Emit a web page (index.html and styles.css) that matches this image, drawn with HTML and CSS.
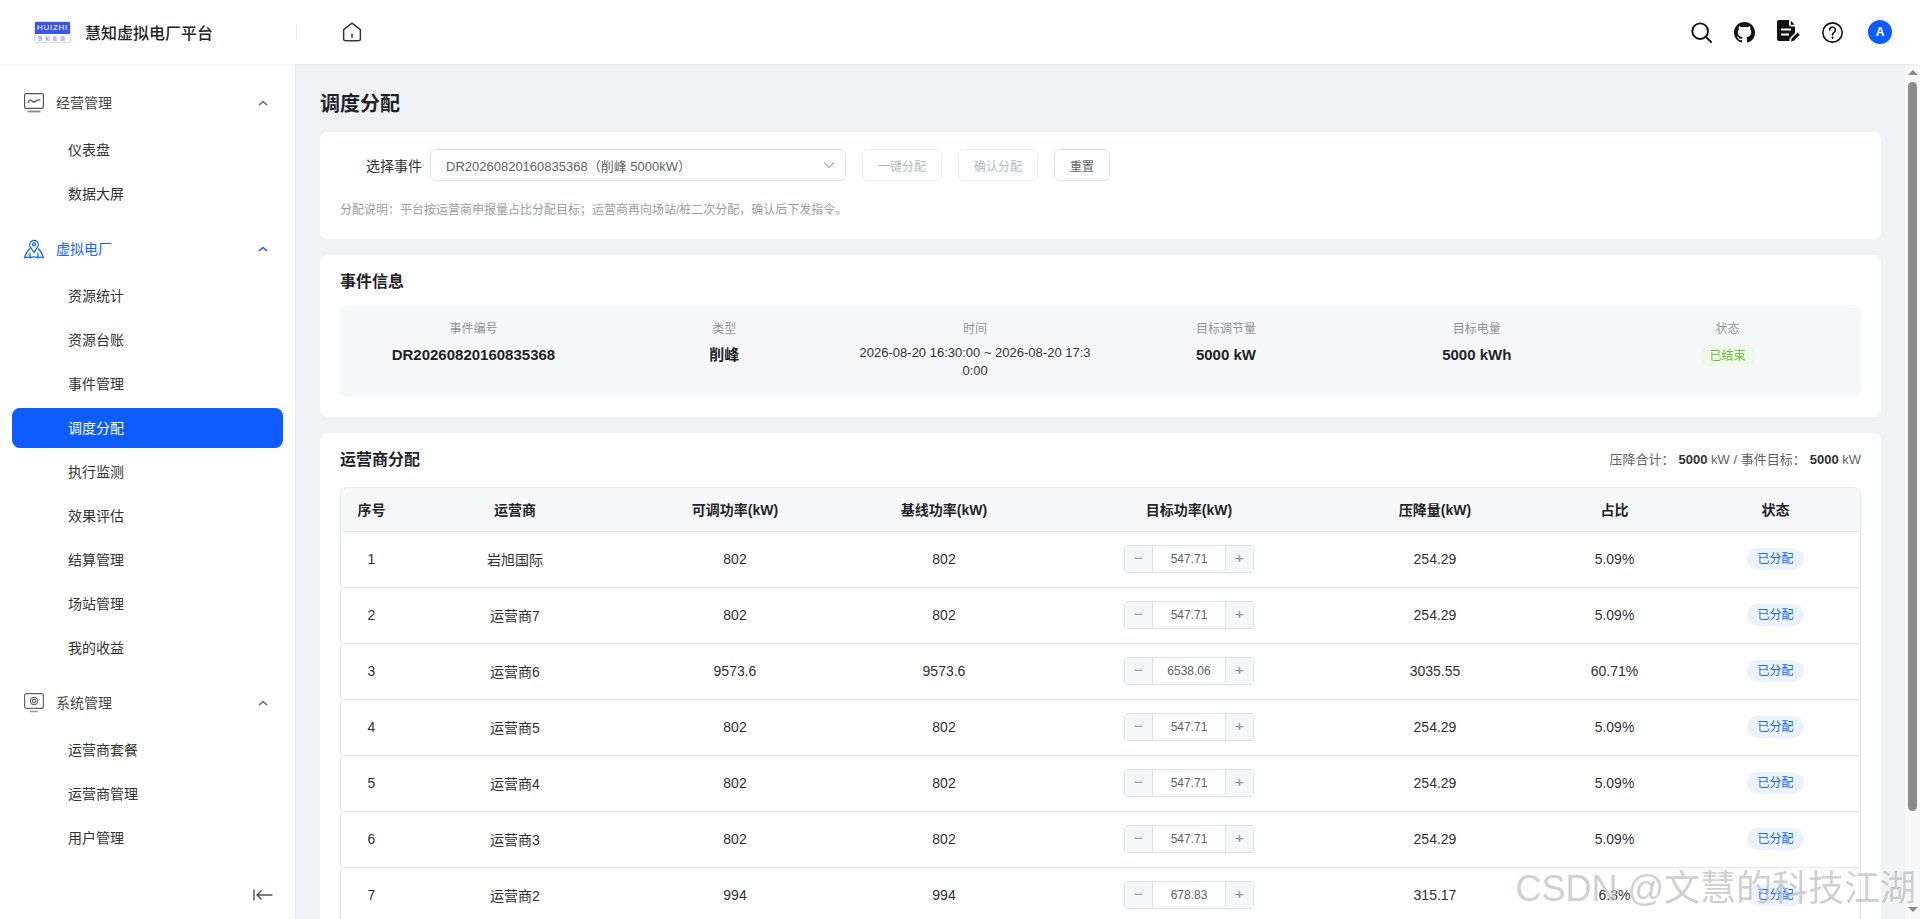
FILE: index.html
```html
<!DOCTYPE html>
<html lang="zh-CN">
<head>
    <meta charset="UTF-8">
    <meta name="viewport" content="width=device-width, initial-scale=1.0">
    <title>慧知虚拟电厂平台 - 调度分配</title>
    <link rel="stylesheet" href="styles.css">
</head>
<body>

    <header class="topbar">
        <div class="brand">
            <div class="logo">
                <span class="logo-top">HUIZHI</span>
                <span class="logo-bottom">慧知能源</span>
            </div>
            <span class="brand-name">慧知虚拟电厂平台</span>
        </div>
        <div class="topbar-left">
            <svg class="home-icon" viewBox="0 0 20 20" fill="none" stroke="#33363f" stroke-width="1.5" stroke-linejoin="round" stroke-linecap="round">
                <path d="M10 1.2 1.6 7.6v9.2a2 2 0 0 0 2 2h12.8a2 2 0 0 0 2-2V7.6L10 1.2Z"/>
                <path d="M10 12.2v3"/>
            </svg>
        </div>
        <div class="topbar-right">
            <svg class="tool-icon" viewBox="0 0 22 22" fill="none" stroke="#111" stroke-width="2" stroke-linecap="round">
                <circle cx="9.6" cy="9.6" r="8.2"/>
                <path d="M15.6 15.6 21 21"/>
            </svg>
            <svg class="tool-icon" viewBox="0 0 16 16" fill="#111">
                <path d="M8 0C3.58 0 0 3.58 0 8c0 3.54 2.29 6.53 5.47 7.59.4.07.55-.17.55-.38 0-.19-.01-.82-.01-1.49-2.01.37-2.53-.49-2.69-.94-.09-.23-.48-.94-.82-1.13-.28-.15-.68-.52-.01-.53.63-.01 1.08.58 1.23.82.72 1.21 1.87.87 2.33.66.07-.52.28-.87.51-1.07-1.78-.2-3.64-.89-3.64-3.95 0-.87.31-1.59.82-2.15-.08-.2-.36-1.02.08-2.12 0 0 .67-.21 2.2.82.64-.18 1.32-.27 2-.27.68 0 1.36.09 2 .27 1.53-1.04 2.2-.82 2.2-.82.44 1.1.16 1.92.08 2.12.51.56.82 1.27.82 2.15 0 3.07-1.87 3.75-3.65 3.95.29.25.54.73.54 1.48 0 1.07-.01 1.93-.01 2.2 0 .21.15.46.55.38A8.013 8.013 0 0016 8c0-4.42-3.58-8-8-8z"/>
            </svg>
            <svg class="tool-icon doc-icon" viewBox="0 0 23 22">
                <path d="M2 0h10v4.500a2 2 0 0 0 2 2h4v6.500l-5.500 5.500V21H2a2 2 0 0 1-2-2V2a2 2 0 0 1 2-2Z" fill="#111"/>
                <path d="M13.800 .6 17.800 4.800h-4Z" fill="#111"/>
                <path d="M4 9.500h10M4 14.500h8" stroke="#fff" stroke-width="2" fill="none"/>
                <path d="M14 21.500l.6-3 6-6 2.200 2.200-6 6-2.800.8Z" fill="#111"/>
            </svg>
            <svg class="tool-icon" viewBox="0 0 20 20" fill="none" stroke="#111" stroke-width="1.5" stroke-linecap="round">
                <circle cx="10" cy="10" r="9.2"/>
                <path d="M7.2 7.6a2.8 2.8 0 1 1 4.4 2.3c-1 .7-1.6 1.2-1.6 2.4"/>
                <path d="M10 14.8v.4" stroke-width="1.8"/>
            </svg>
            <div class="avatar">A</div>
        </div>
    </header>

    <div class="layout">
        <aside class="sidebar">
            <nav class="menu">
                <div class="menu-group">
                    <div class="menu-head">
                        <svg class="menu-icon" viewBox="0 0 20 20" fill="none" stroke="#555" stroke-width="1.2">
                            <rect x=".6" y=".6" width="18.8" height="14.8" rx="1.5"/>
                            <path d="M4 9.5c1.5-3 2.5-3 4-1.5s2.500 1.500 4 0 2.500-1.500 4-1" stroke-linecap="round"/>
                            <path d="M3.500 18.500h13" stroke-width="1.800" stroke="#888"/>
                        </svg>
                        <span class="menu-title">经营管理</span>
                        <svg class="chevron" viewBox="0 0 10 6" fill="none" stroke="#666" stroke-width="1.600"><path d="M1 5 5 1.500 9 5"/></svg>
                    </div>
                    <div class="menu-item">仪表盘</div>
                    <div class="menu-item">数据大屏</div>
                </div>

                <div class="menu-group open">
                    <div class="menu-head">
                        <svg class="menu-icon" viewBox="0 0 20 20" fill="none" stroke="#1664ff" stroke-width="1.300" stroke-linejoin="round">
                            <path d="M10 13.500 6.800 8.600a4.300 4.300 0 1 1 6.400 0L10 13.500Z"/>
                            <circle cx="10" cy="5.400" r="1.500"/>
                            <path d="M5.800 9.500C3.600 11.800 1.400 15 .7 18.800c1.900-1 3.900-1 5.800 0 1.100-.8 2.300-1 3.500-1s2.400.2 3.500 1c1.900-1 3.900-1 5.800 0-.7-3.800-2.900-7-5.100-9.300"/>
                            <path d="M6.500 18.800c-.5-1.800-.7-3.500-.4-5M13.500 18.800c.5-1.800.7-3.500.4-5"/>
                        </svg>
                        <span class="menu-title">虚拟电厂</span>
                        <svg class="chevron" viewBox="0 0 10 6" fill="none" stroke="#1664ff" stroke-width="1.600"><path d="M1 5 5 1.500 9 5"/></svg>
                    </div>
                    <div class="menu-item">资源统计</div>
                    <div class="menu-item">资源台账</div>
                    <div class="menu-item">事件管理</div>
                    <div class="menu-item active">调度分配</div>
                    <div class="menu-item">执行监测</div>
                    <div class="menu-item">效果评估</div>
                    <div class="menu-item">结算管理</div>
                    <div class="menu-item">场站管理</div>
                    <div class="menu-item">我的收益</div>
                </div>

                <div class="menu-group">
                    <div class="menu-head">
                        <svg class="menu-icon" viewBox="0 0 20 20" fill="none" stroke="#666" stroke-width="1.200">
                            <rect x=".6" y=".6" width="18.8" height="14.800" rx="2"/>
                            <circle cx="10" cy="8" r="3.600"/>
                            <circle cx="10" cy="8" r="1.600"/>
                            <path d="M6 18.500h8" stroke-width="1.500" stroke="#999"/>
                        </svg>
                        <span class="menu-title">系统管理</span>
                        <svg class="chevron" viewBox="0 0 10 6" fill="none" stroke="#666" stroke-width="1.600"><path d="M1 5 5 1.500 9 5"/></svg>
                    </div>
                    <div class="menu-item">运营商套餐</div>
                    <div class="menu-item">运营商管理</div>
                    <div class="menu-item">用户管理</div>
                </div>
            </nav>
            <div class="collapse-bar">
                <svg class="collapse-icon" viewBox="0 0 20 12" fill="none" stroke="#4a4f5c" stroke-width="1.400">
                    <path d="M1 .5v11M19.500 6H4M8.500 1.500 4 6l4.500 4.500"/>
                </svg>
            </div>
        </aside>

        <main class="content">
            <h2 class="page-title">调度分配</h2>

            <section class="card">
                <div class="form-row">
                    <label class="form-label">选择事件</label>
                    <div class="select-box">
                        <span>DR20260820160835368（削峰 5000kW）</span>
                        <svg class="select-arrow" viewBox="0 0 12 8" fill="none" stroke="#aaa" stroke-width="1.100"><path d="M1 1.500 6 6.500l5-5"/></svg>
                    </div>
                    <button class="btn disabled">一键分配</button>
                    <button class="btn disabled">确认分配</button>
                    <button class="btn btn-small">重置</button>
                </div>
                <p class="hint">分配说明：平台按运营商申报量占比分配目标；运营商再向场站/桩二次分配，确认后下发指令。</p>
            </section>

            <section class="card">
                <h3 class="card-title">事件信息</h3>
                <div class="info-box">
                    <div class="info-col">
                        <div class="info-label">事件编号</div>
                        <div class="info-value">DR20260820160835368</div>
                    </div>
                    <div class="info-col">
                        <div class="info-label">类型</div>
                        <div class="info-value">削峰</div>
                    </div>
                    <div class="info-col">
                        <div class="info-label">时间</div>
                        <div class="info-time">2026-08-20 16:30:00 ~ 2026-08-20 17:30:00</div>
                    </div>
                    <div class="info-col">
                        <div class="info-label">目标调节量</div>
                        <div class="info-value">5000 kW</div>
                    </div>
                    <div class="info-col">
                        <div class="info-label">目标电量</div>
                        <div class="info-value">5000 kWh</div>
                    </div>
                    <div class="info-col">
                        <div class="info-label">状态</div>
                        <span class="tag tag-green">已结束</span>
                    </div>
                </div>
            </section>

            <section class="card card-last">
                <div class="card-head">
                    <h3 class="card-title">运营商分配</h3>
                    <div class="summary">压降合计：<b>5000</b> kW / 事件目标：<b>5000</b> kW</div>
                </div>
                <div class="table-wrap">
                    <table class="alloc-table">
                        <colgroup>
                            <col class="col-no">
                            <col class="col-name">
                            <col class="col-adj">
                            <col class="col-base">
                            <col class="col-target">
                            <col class="col-drop">
                            <col class="col-rate">
                            <col>
                        </colgroup>
                        <thead>
                            <tr>
                                <th>序号</th>
                                <th>运营商</th>
                                <th>可调功率(kW)</th>
                                <th>基线功率(kW)</th>
                                <th>目标功率(kW)</th>
                                <th>压降量(kW)</th>
                                <th>占比</th>
                                <th>状态</th>
                            </tr>
                        </thead>
                        <tbody id="allocRows">
                            <!-- rows come from app.js -->
                        </tbody>
                    </table>
                </div>
            </section>
        </main>

        <!-- headless browser hides native scrollbars, so this one is drawn -->
        <div class="scroll-rail">
            <span class="rail-arrow rail-up"></span>
            <span class="rail-thumb"></span>
            <span class="rail-arrow rail-down"></span>
        </div>
    </div>

    <div class="watermark">CSDN @文慧的科技江湖</div>

    <script src="app.js"></script>
</body>
</html>
```

FILE: styles.css
```css
* {
    box-sizing: border-box;
}
html, body {
    height: 100%;
}
body {
    margin: 0;
    overflow: hidden;
    display: flex;
    flex-direction: column;
    font-family: "Liberation Sans", "Noto Sans CJK SC", sans-serif;
    font-size: 14px;
    color: #303133;
    background-color: #fff;
}

/* top bar */
.topbar {
    height: 64px;
    flex-shrink: 0;
    display: flex;
    align-items: center;
    background-color: #fff;
    box-shadow: 0 1px 2px rgba(0, 0, 0, 0.06);
    position: relative;
    z-index: 2;
}
.brand {
    width: 297px;
    height: 16px;
    display: flex;
    align-items: center;
    padding-left: 34px;
    border-right: 1px solid #e4e7ed;
}
.logo {
    width: 37px;
    height: 22px;
    flex-shrink: 0;
    display: flex;
    flex-direction: column;
    align-items: center;
    border: 1px solid #d5dcfb;
    border-radius: 2px;
    overflow: hidden;
}
.logo-top {
    width: 100%;
    height: 12px;
    background-color: #3c55e6;
    color: #fff;
    font-size: 8px;
    line-height: 12px;
    letter-spacing: 0.7px;
    text-align: center;
}
.logo-bottom {
    font-size: 5px;
    line-height: 8px;
    letter-spacing: 2.500px;
    color: #6b7bd8;
    white-space: nowrap;
}
.brand-name {
    margin-left: 14px;
    font-size: 16px;
    font-weight: 500;
    color: #1f2329;
}
.topbar-left {
    display: flex;
    align-items: center;
    padding-left: 45px;
    flex: 1;
}
.home-icon {
    width: 20px;
    height: 20px;
}
.topbar-right {
    display: flex;
    align-items: center;
    gap: 22px;
    padding-right: 28px;
}
.tool-icon {
    width: 21px;
    height: 21px;
}
.doc-icon {
    width: 23px;
    height: 22px;
    margin-top: -2px;
}
.avatar {
    width: 24px;
    height: 24px;
    margin-left: 3px;
    border-radius: 50%;
    background-color: #0d5cff;
    color: #fff;
    font-size: 12px;
    font-weight: bold;
    line-height: 24px;
    text-align: center;
}

/* main layout */
.layout {
    flex: 1;
    min-height: 0;
    display: flex;
}
.sidebar {
    width: 296px;
    flex-shrink: 0;
    display: flex;
    flex-direction: column;
    border-right: 1px solid #e6e8ec;
    background-color: #fff;
}
.menu {
    flex: 1;
    min-height: 0;
    padding: 15px 12px 0;
}
.menu-group {
    margin-bottom: 11px;
}
.menu-head {
    height: 48px;
    margin-bottom: 3px;
    display: flex;
    align-items: center;
    padding: 0 15px 0 12px;
    color: #444;
}
.menu-group.open .menu-head {
    color: #1664ff;
}
.menu-icon {
    width: 20px;
    height: 20px;
    flex-shrink: 0;
}
.menu-title {
    flex: 1;
    margin: -2px 0 0 12px;
}
.chevron {
    width: 10px;
    height: 6px;
}
.menu-item {
    height: 40px;
    margin-bottom: 4px;
    padding-left: 56px;
    border-radius: 8px;
    line-height: 40px;
    color: #333;
}
.menu-item.active {
    background-color: #0d5cff;
    color: #fff;
}
.collapse-bar {
    height: 48px;
    display: flex;
    justify-content: flex-end;
    align-items: center;
    padding-right: 22px;
}
.collapse-icon {
    width: 20px;
    height: 12px;
}

/* content */
.content {
    flex: 1;
    min-width: 0;
    overflow: hidden;
    padding: 25px 24px 20px;
    background-color: #f0f2f6;
}
.page-title {
    margin: 0 0 13px;
    font-size: 20px;
    line-height: 30px;
    font-weight: bold;
    color: #1f2329;
}
.card {
    margin-bottom: 16px;
    padding: 17px 20px 20px;
    border-radius: 8px;
    background-color: #fff;
}
.card-last {
    margin-bottom: 0;
}
.card-title {
    margin: -2px 0 11px;
    font-size: 16px;
    line-height: 24px;
    font-weight: bold;
    color: #1f2329;
}
.form-row {
    display: flex;
    align-items: center;
    gap: 16px;
}
.form-label {
    width: 82px;
    margin-right: -8px;
    text-align: right;
    font-size: 14px;
    color: #303133;
}
.select-box {
    width: 416px;
    height: 32px;
    display: flex;
    align-items: center;
    justify-content: space-between;
    padding: 0 10px 0 15px;
    border: 1px solid #dcdfe6;
    border-radius: 6px;
    font-size: 13px;
    color: #606266;
}
.select-arrow {
    width: 12px;
    height: 8px;
}
.btn {
    width: 80px;
    height: 32px;
    border: 1px solid #dcdfe6;
    border-radius: 6px;
    background-color: #fff;
    font-family: inherit;
    font-size: 12px;
    color: #606266;
}
.btn.disabled {
    border-color: #ebeef5;
    color: #b5b8bf;
}
.btn-small {
    width: 56px;
}
.hint {
    margin: 20px 0 0;
    font-size: 12px;
    line-height: 18px;
    color: #9a9da3;
}

/* event info */
.info-box {
    height: 92px;
    display: grid;
    grid-template-columns: repeat(6, 1fr);
    gap: 16px;
    padding: 16px;
    border-radius: 8px;
    background-color: #f7f8fa;
}
.info-col {
    min-width: 0;
    text-align: center;
}
.info-label {
    margin-bottom: 8px;
    font-size: 12px;
    line-height: 16px;
    color: #909399;
}
.info-value {
    font-size: 15px;
    line-height: 20px;
    font-weight: bold;
    color: #1f2329;
}
.info-time {
    margin-top: -1px;
    font-size: 13px;
    line-height: 18px;
    word-break: break-all;
    color: #303133;
}
.tag {
    display: inline-block;
    height: 22px;
    padding: 0 10px;
    border-radius: 11px;
    font-size: 12px;
    line-height: 22px;
}
.tag-green {
    background-color: #eff9ea;
    color: #67c23a;
}
.tag-blue {
    background-color: #ecf3ff;
    color: #1664ff;
}

/* allocation table */
.card-head {
    display: flex;
    justify-content: space-between;
    margin-bottom: 4px;
}
.summary {
    margin-top: -2px;
    font-size: 13px;
    line-height: 24px;
    color: #606266;
}
.summary b {
    margin-left: 4px;
    color: #303133;
}
.table-wrap {
    border: 1px solid #e4e7ed;
    border-radius: 8px;
    overflow: hidden;
}
.alloc-table {
    width: 100%;
    border-collapse: collapse;
    table-layout: fixed;
}
.col-no { width: 61px; }
.col-name { width: 226px; }
.col-adj { width: 214px; }
.col-base { width: 204px; }
.col-target { width: 286px; }
.col-drop { width: 206px; }
.col-rate { width: 153px; }
.alloc-table th {
    height: 43px;
    background-color: #f7f8f9;
    font-size: 14px;
    font-weight: bold;
    color: #1f2329;
    text-align: center;
}
.alloc-table td {
    height: 56px;
    border-top: 1px solid #e4e7ed;
    font-size: 14px;
    color: #303133;
    text-align: center;
}
.stepper {
    width: 130px;
    height: 28px;
    margin: 0 auto;
    display: flex;
    border: 1px solid #dcdfe6;
    border-radius: 4px;
    overflow: hidden;
}
.step-btn {
    width: 28px;
    flex-shrink: 0;
    background-color: #f5f7fa;
    color: #8c9099;
    font-size: 15px;
    line-height: 24px;
}
.step-minus {
    border-right: 1px solid #dcdfe6;
}
.step-plus {
    border-left: 1px solid #dcdfe6;
}
.step-value {
    flex: 1;
    font-size: 12px;
    line-height: 26px;
    color: #606266;
}

/* drawn scrollbar */
.scroll-rail {
    width: 15px;
    flex-shrink: 0;
    display: flex;
    flex-direction: column;
    align-items: center;
    padding-top: 6px;
    background-color: #f8f8f8;
}
.rail-arrow {
    width: 0;
    height: 0;
    border-left: 5px solid transparent;
    border-right: 5px solid transparent;
}
.rail-up {
    border-bottom: 5px solid #8b8b8b;
}
.rail-down {
    margin-top: 96px;
    border-top: 5px solid #8b8b8b;
}
.rail-thumb {
    width: 9px;
    height: 729px;
    margin-top: 7px;
    border-radius: 5px;
    background-color: #8b8b8b;
}

.watermark {
    position: absolute;
    right: 4px;
    bottom: 10px;
    font-size: 36px;
    line-height: 40px;
    white-space: nowrap;
    color: rgba(140, 140, 140, 0.42);
    text-shadow: 1px 1px 1px rgba(255, 255, 255, 0.6);
    pointer-events: none;
}
```

FILE: app.js
```js
// name, adjustable, baseline, target, drop, rate
const allocRows = [
    ['岩旭国际', '802', '802', '547.71', '254.29', '5.09%'],
    ['运营商7', '802', '802', '547.71', '254.29', '5.09%'],
    ['运营商6', '9573.6', '9573.6', '6538.06', '3035.55', '60.71%'],
    ['运营商5', '802', '802', '547.71', '254.29', '5.09%'],
    ['运营商4', '802', '802', '547.71', '254.29', '5.09%'],
    ['运营商3', '802', '802', '547.71', '254.29', '5.09%'],
    ['运营商2', '994', '994', '678.83', '315.17', '6.3%'],
    ['运营商1', '1192', '1192', '814.17', '377.83', '7.56%']
];

const tbody = document.getElementById('allocRows');

allocRows.forEach(function (row, i) {
    const tr = document.createElement('tr');
    tr.innerHTML =
        '<td>' + (i + 1) + '</td>' +
        '<td>' + row[0] + '</td>' +
        '<td>' + row[1] + '</td>' +
        '<td>' + row[2] + '</td>' +
        '<td><div class="stepper"><span class="step-btn step-minus">−</span>' +
        '<span class="step-value">' + row[3] + '</span>' +
        '<span class="step-btn step-plus">+</span></div></td>' +
        '<td>' + row[4] + '</td>' +
        '<td>' + row[5] + '</td>' +
        '<td><span class="tag tag-blue">已分配</span></td>';
    tbody.appendChild(tr);
});
```
